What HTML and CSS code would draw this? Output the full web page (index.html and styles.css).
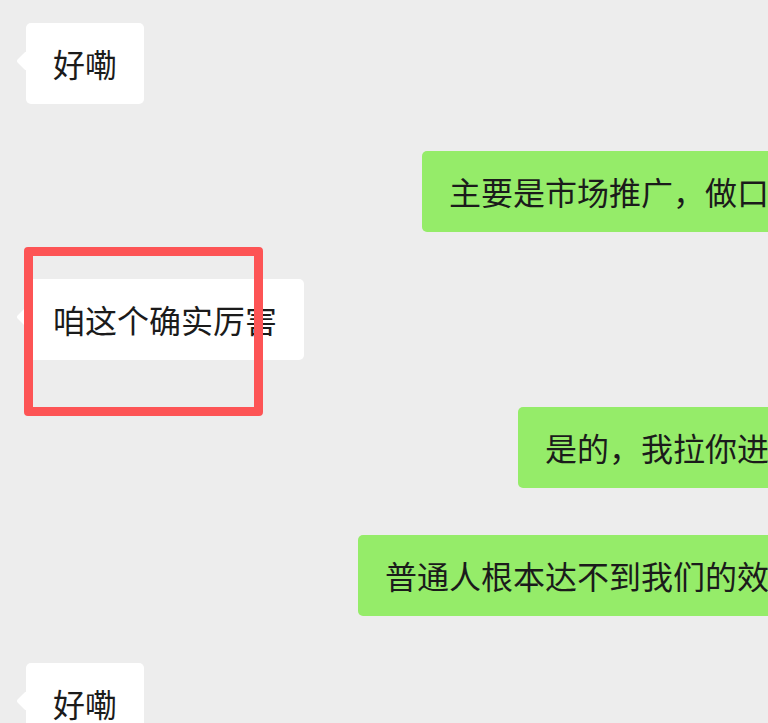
FILE: index.html
```html
<!DOCTYPE html>
<html lang="zh-CN">
<head>
  <meta charset="UTF-8">
  <title>聊天记录</title>
  <meta name="viewport" content="width=device-width, initial-scale=1.0">
  <link rel="stylesheet" href="styles.css">
</head>
<body>
  <div class="chat">
    <div class="row left">
      <div class="bubble">好嘞</div>
    </div>
    <div class="row right">
      <div class="bubble">主要是市场推广，做口碑</div>
    </div>
    <div class="row left">
      <div class="bubble">咱这个确实厉害</div>
    </div>
    <div class="row right">
      <div class="bubble">是的，我拉你进群</div>
    </div>
    <div class="row right">
      <div class="bubble">普通人根本达不到我们的效果</div>
    </div>
    <div class="row left">
      <div class="bubble">好嘞</div>
    </div>
  </div>
  <div class="highlight"></div>
</body>
</html>
```
FILE: styles.css
```css
html, body {
  height: 100%;
}
body {
  margin: 0;
  background: #ededed;
  color: #1b1b1b;
  font-family: "Noto Sans CJK SC", "Noto Sans", sans-serif;
  overflow: hidden;
  position: relative;
}
.chat {
  width: 828px;
  padding-top: 23px;
  display: flex;
  flex-direction: column;
  gap: 47px;
}
.row {
  display: flex;
}
.row.left {
  justify-content: flex-start;
  padding-left: 26px;
}
.row.right {
  justify-content: flex-end;
}
.bubble {
  position: relative;
  height: 81px;
  line-height: 81px;
  padding: 0 27px;
  font-size: 32px;
  border-radius: 5px;
  white-space: nowrap;
  background: #fff;
}
.bubble::before {
  content: "";
  position: absolute;
  top: 31px;
  width: 14px;
  height: 14px;
  border-radius: 2px;
  transform: rotate(45deg);
  background: inherit;
}
.left .bubble::before {
  left: -7px;
}
.right .bubble {
  background: #95ec69;
}
.right .bubble::before {
  right: -7px;
}
.highlight {
  position: absolute;
  left: 24px;
  top: 247px;
  width: 239px;
  height: 169px;
  box-sizing: border-box;
  border: 9px solid #fd5455;
  border-radius: 4px;
}
```
